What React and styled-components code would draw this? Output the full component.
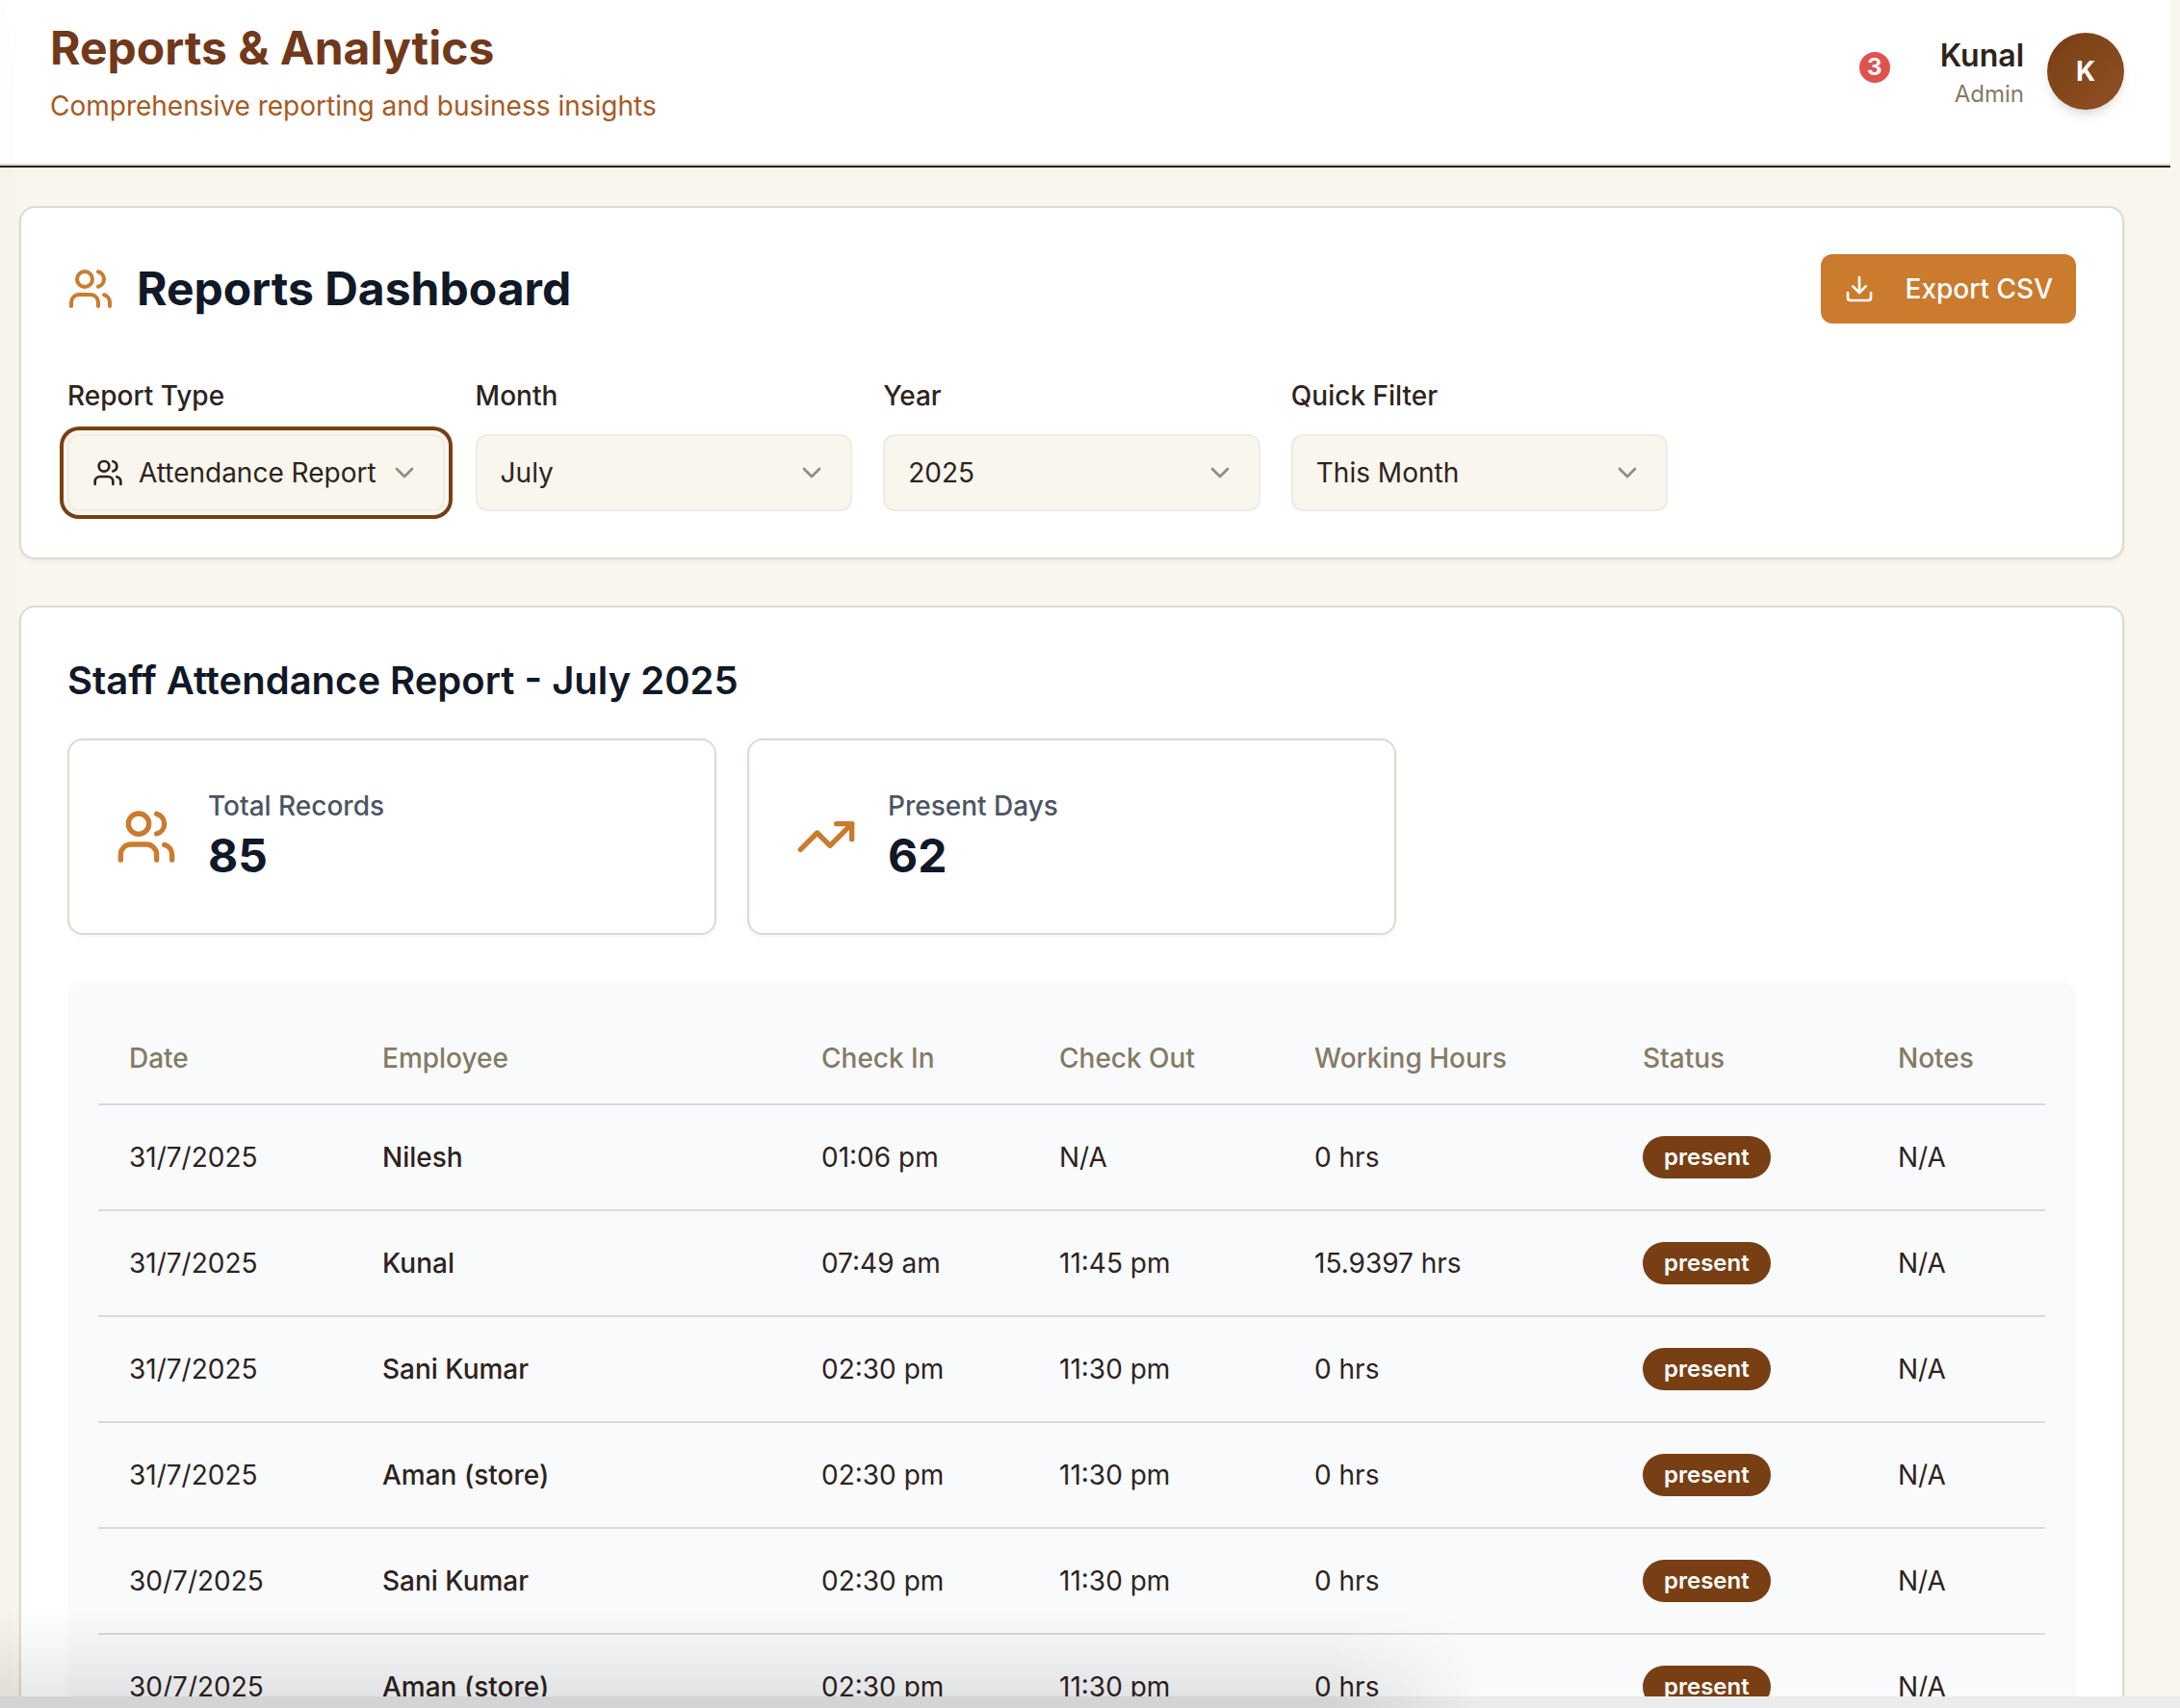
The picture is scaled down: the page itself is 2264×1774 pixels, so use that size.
import React, { useState } from "react";
import styled, { createGlobalStyle, css } from "styled-components";
import { ChevronDown, Download, TrendingUp, Users } from "lucide-react";

const color = {
  cream: "#f9f6ee",
  line: "#dedad0",
  brown: "#783f14",
  amber: "#ca7b2e",
  ink: "#2e231d",
  navy: "#111827",
  slate: "#4b5563",
  olive: "#857a64",
};

const GlobalStyle = createGlobalStyle`
  *, *::before, *::after { box-sizing: border-box; }
  html, body { margin: 0; height: 100%; overflow: hidden; }
  body {
    background: ${color.cream};
    color: ${color.ink};
    font-family: Inter, "Liberation Sans", sans-serif;
    font-size: 28px;
    line-height: 40px;
  }
  h1, h2, h3, p { margin: 0; }
  button, select { font: inherit; }
`;

const Viewport = styled.div`
  height: 100vh;
  overflow: hidden;
  padding-right: 10px;
`;

const Header = styled.header`
  display: flex;
  justify-content: space-between;
  align-items: center;
  padding: 18px 48px 40px 52px;
  background: #fff;
  border-bottom: 2px solid ${color.line};
  box-shadow: 0 2px 0 #2c2022;
`;

const Heading = styled.div`
  display: flex;
  flex-direction: column;
  gap: 8px;
`;

const PageTitle = styled.h1`
  color: #71381a;
  font-size: 48px;
  font-weight: 700;
  line-height: 64px;
`;

const PageSubtitle = styled.p`
  color: #a9591f;
`;

const HeaderActions = styled.div`
  display: flex;
  align-items: center;
  gap: 52px;
`;

const NotificationButton = styled.button`
  display: flex;
  align-items: flex-start;
  height: 80px;
  padding: 20px 0 0;
  border: 0;
  background: transparent;
  cursor: pointer;
`;

const Count = styled.span`
  width: 32px;
  height: 32px;
  border-radius: 50%;
  background: #df524f;
  color: #fff;
  font-size: 24px;
  font-weight: 700;
  line-height: 32px;
  text-align: center;
`;

const User = styled.div`
  display: flex;
  align-items: center;
  gap: 24px;
  text-align: right;
`;

const UserName = styled.p`
  font-size: 32px;
  font-weight: 600;
  line-height: 48px;
`;

const UserRole = styled.p`
  color: ${color.olive};
  font-size: 24px;
  line-height: 32px;
`;

const Avatar = styled.div`
  display: grid;
  place-items: center;
  width: 80px;
  height: 80px;
  border-radius: 50%;
  background: linear-gradient(135deg, #783f14, #905024);
  box-shadow: 0 8px 12px -2px rgba(0, 0, 0, 0.1), 0 4px 8px -4px rgba(0, 0, 0, 0.1);
  color: #fff;
  font-weight: 700;
`;

const Main = styled.main`
  display: flex;
  flex-direction: column;
  gap: 48px;
  padding: 42px 48px 48px 20px;
`;

const panel = css`
  background: #fff;
  border: 2px solid ${color.line};
  border-radius: 16px;
  box-shadow: 0 2px 4px rgba(0, 0, 0, 0.05);
`;

const Card = styled.section`
  ${panel}
  padding: 48px;
`;

const CardHead = styled.div`
  display: flex;
  justify-content: space-between;
  align-items: center;
`;

const DashboardTitle = styled.h2`
  display: flex;
  align-items: center;
  gap: 24px;
  color: ${color.navy};
  font-size: 48px;
  font-weight: 700;
  line-height: 64px;

  svg { color: ${color.amber}; }
`;

const ExportButton = styled.button`
  display: flex;
  align-items: center;
  gap: 32px;
  height: 72px;
  padding: 0 24px;
  border: 0;
  border-radius: 12px;
  background: ${color.amber};
  color: #fff;
  font-weight: 500;
  cursor: pointer;
`;

const Filters = styled.div`
  display: grid;
  grid-template-columns: repeat(5, 1fr);
  gap: 32px;
  margin-top: 55px;
`;

const Field = styled.div`
  display: flex;
  flex-direction: column;
  gap: 20px;
`;

const FieldLabel = styled.label`
  font-weight: 500;
`;

const SelectBox = styled.div`
  display: grid;
  align-items: center;

  > * { grid-area: 1 / 1; }
  > svg { pointer-events: none; }
`;

const Select = styled.select`
  appearance: none;
  width: 100%;
  height: 80px;
  padding: 0 58px 0 ${(p) => (p.$withIcon ? 72 : 24)}px;
  border: 2px solid #eeece5;
  border-radius: 12px;
  outline: none;
  background: ${color.cream};
  color: ${color.ink};
  box-shadow: ${(p) => (p.$active ? `0 0 0 4px ${color.cream}, 0 0 0 8px ${color.brown}` : "none")};
  cursor: pointer;
`;

const Chevron = styled(ChevronDown)`
  justify-self: end;
  margin-right: 26px;
  opacity: 0.5;
`;

const LeadIcon = styled(Users)`
  margin-left: 26px;
`;

const ReportTitle = styled.h3`
  color: ${color.navy};
  font-size: 40px;
  font-weight: 600;
  line-height: 56px;
`;

const Stats = styled.div`
  display: grid;
  grid-template-columns: repeat(3, 1fr);
  gap: 32px;
  margin: 32px 0 48px;
`;

const Stat = styled.div`
  ${panel}
  display: flex;
  align-items: center;
  gap: 32px;
  padding: 48px;

  svg { color: ${color.amber}; }
`;

const StatLabel = styled.p`
  color: ${color.slate};
  font-weight: 500;
`;

const StatValue = styled.p`
  color: ${color.navy};
  font-size: 48px;
  font-weight: 700;
  line-height: 64px;
`;

const TablePanel = styled.div`
  padding: 32px;
  border-radius: 16px;
  background: #f9fafc;
`;

const Table = styled.table`
  width: 100%;
  table-layout: fixed;
  border-spacing: 0;
  text-align: left;
`;

const Col = styled.col`
  width: ${(p) => p.$width}px;
`;

const Th = styled.th`
  height: 97px;
  padding: 0 32px;
  border-bottom: 2px solid ${color.line};
  color: ${color.olive};
  font-weight: 500;
`;

const Td = styled.td`
  height: 110px;
  padding: 0 32px;
  border-bottom: 2px solid ${color.line};
  font-weight: ${(p) => (p.$strong ? 500 : 400)};
`;

const Badge = styled.span`
  display: block;
  width: fit-content;
  padding: 6px 22px;
  border-radius: 22px;
  background: ${color.brown};
  color: #fff;
  font-size: 24px;
  font-weight: 600;
  line-height: 32px;
`;

const EdgeShade = styled.div`
  position: fixed;
  inset: 0 auto 0 0;
  width: 15px;
  border-top-right-radius: 15px 120px;
  background: rgba(0, 0, 0, 0.008);
  pointer-events: none;
`;

const BottomShade = styled.div`
  position: fixed;
  inset: auto 32% 12px 0;
  height: 90px;
  background: linear-gradient(to bottom, transparent, rgba(0, 0, 0, 0.03) 40%, rgba(0, 0, 0, 0.09));
  mask-image: linear-gradient(to right, #000 90%, transparent);
  pointer-events: none;
`;

const BottomEdge = styled.div`
  position: fixed;
  inset: auto 0 0 0;
  height: 12px;
  background: linear-gradient(to right, #d3d4d5 61%, #ebeced 68%);
  pointer-events: none;
`;

const filters = [
  { id: "report-type", label: "Report Type", options: ["Attendance Report", "Sales Report"], icon: true, active: true },
  { id: "month", label: "Month", options: ["July", "June", "May"] },
  { id: "year", label: "Year", options: ["2025", "2024"] },
  { id: "quick-filter", label: "Quick Filter", options: ["This Month", "Last Month"] },
];

const columns = [
  ["Date", 263],
  ["Employee", 456],
  ["Check In", 247],
  ["Check Out", 265],
  ["Working Hours", 341],
  ["Status", 265],
  ["Notes", 185],
];

const records = [
  ["31/7/2025", "Nilesh", "01:06 pm", "N/A", "0 hrs"],
  ["31/7/2025", "Kunal", "07:49 am", "11:45 pm", "15.9397 hrs"],
  ["31/7/2025", "Sani Kumar", "02:30 pm", "11:30 pm", "0 hrs"],
  ["31/7/2025", "Aman (store)", "02:30 pm", "11:30 pm", "0 hrs"],
  ["30/7/2025", "Sani Kumar", "02:30 pm", "11:30 pm", "0 hrs"],
  ["30/7/2025", "Aman (store)", "02:30 pm", "11:30 pm", "0 hrs"],
];

function FilterField({ id, label, options, icon, active }) {
  const [value, setValue] = useState(options[0]);
  return (
    <Field>
      <FieldLabel htmlFor={id}>{label}</FieldLabel>
      <SelectBox>
        <Select id={id} value={value} onChange={(e) => setValue(e.target.value)} $withIcon={icon} $active={active}>
          {options.map((option) => (
            <option key={option}>{option}</option>
          ))}
        </Select>
        {icon && <LeadIcon size={32} />}
        <Chevron size={32} />
      </SelectBox>
    </Field>
  );
}

export default function App() {
  return (
    <>
      <GlobalStyle />
      <Viewport>
        <Header>
          <Heading>
            <PageTitle>Reports &amp; Analytics</PageTitle>
            <PageSubtitle>Comprehensive reporting and business insights</PageSubtitle>
          </Heading>
          <HeaderActions>
            <NotificationButton type="button">
              <Count>3</Count>
            </NotificationButton>
            <User>
              <div>
                <UserName>Kunal</UserName>
                <UserRole>Admin</UserRole>
              </div>
              <Avatar>K</Avatar>
            </User>
          </HeaderActions>
        </Header>

        <Main>
          <Card>
            <CardHead>
              <DashboardTitle>
                <Users size={48} />
                Reports Dashboard
              </DashboardTitle>
              <ExportButton type="button">
                <Download size={32} />
                Export CSV
              </ExportButton>
            </CardHead>
            <Filters>
              {filters.map((filter) => (
                <FilterField key={filter.id} {...filter} />
              ))}
            </Filters>
          </Card>

          <Card>
            <ReportTitle>Staff Attendance Report - July 2025</ReportTitle>
            <Stats>
              <Stat>
                <Users size={64} />
                <div>
                  <StatLabel>Total Records</StatLabel>
                  <StatValue>85</StatValue>
                </div>
              </Stat>
              <Stat>
                <TrendingUp size={64} />
                <div>
                  <StatLabel>Present Days</StatLabel>
                  <StatValue>62</StatValue>
                </div>
              </Stat>
            </Stats>
            <TablePanel>
              <Table>
                <colgroup>
                  {columns.map(([name, width]) => (
                    <Col key={name} $width={width} />
                  ))}
                </colgroup>
                <thead>
                  <tr>
                    {columns.map(([name]) => (
                      <Th key={name} scope="col">{name}</Th>
                    ))}
                  </tr>
                </thead>
                <tbody>
                  {records.map(([date, employee, checkIn, checkOut, hours], i) => (
                    <tr key={i}>
                      <Td>{date}</Td>
                      <Td $strong>{employee}</Td>
                      <Td>{checkIn}</Td>
                      <Td>{checkOut}</Td>
                      <Td>{hours}</Td>
                      <Td><Badge>present</Badge></Td>
                      <Td>N/A</Td>
                    </tr>
                  ))}
                </tbody>
              </Table>
            </TablePanel>
          </Card>
        </Main>
      </Viewport>
      <EdgeShade />
      <BottomShade />
      <BottomEdge />
    </>
  );
}
